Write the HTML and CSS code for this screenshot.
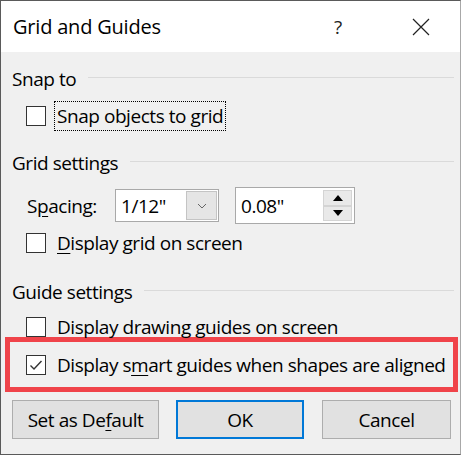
FILE: index.html
```html
<!DOCTYPE html>
<html lang="en">
<head>
    <meta charset="UTF-8">
    <title>Grid and Guides</title>
    <link rel="stylesheet" href="styles.css">
</head>
<body>
    <div class="dialog">
        <div class="titlebar">
            <span class="titlebar__title">Grid and Guides</span>
            <span class="titlebar__help">?</span>
            <span class="titlebar__close">
                <svg width="18" height="18" viewBox="0 0 18 18"><path d="M1 1 L17 17 M17 1 L1 17" stroke="#222" stroke-width="1.2" fill="none"/></svg>
            </span>
        </div>
        <div class="content">
            <div class="group">
                <span>Snap to</span>
                <div class="group__line"></div>
            </div>
            <div class="row row--snap">
                <span class="check"></span>
                <span class="label label--focus">Snap objects to <u>g</u>rid</span>
            </div>

            <div class="group group--grid">
                <span>Grid settings</span>
                <div class="group__line"></div>
            </div>
            <div class="row row--spacing">
                <span class="spacing-label">S<u>p</u>acing:</span>
                <div class="combo">
                    <span class="combo__value">1/12"</span>
                    <span class="combo__button">
                        <svg width="10" height="6" viewBox="0 0 10 6"><path d="M1 1 L5 5 L9 1" stroke="#666" stroke-width="1" fill="none"/></svg>
                    </span>
                </div>
                <div class="spin">
                    <span class="spin__value">0.08"</span>
                    <span class="spin__buttons">
                        <span class="spin__btn"><svg width="10" height="6" viewBox="0 0 10 6"><path d="M0 6 L5 0 L10 6 Z" fill="#000"/></svg></span>
                        <span class="spin__btn"><svg width="10" height="6" viewBox="0 0 10 6"><path d="M0 0 L5 6 L10 0 Z" fill="#000"/></svg></span>
                    </span>
                </div>
            </div>
            <div class="row row--display-grid">
                <span class="check"></span>
                <span class="label"><u>D</u>isplay grid on screen</span>
            </div>

            <div class="group group--guide">
                <span>Guide settings</span>
                <div class="group__line"></div>
            </div>
            <div class="row row--drawing">
                <span class="check"></span>
                <span class="label">Display drawing guides on screen</span>
            </div>
            <div class="highlight">
                <span class="check check--on">
                    <svg width="18" height="18" viewBox="0 0 18 18"><path d="M3.5 9.5 L7 13 L14.5 5" stroke="#333" stroke-width="1.4" fill="none"/></svg>
                </span>
                <span class="label">Display s<u>m</u>art guides when shapes are aligned</span>
            </div>

            <div class="buttons">
                <button class="btn btn--default">Set as De<u>f</u>ault</button>
                <button class="btn btn--ok">OK</button>
                <button class="btn btn--cancel">Cancel</button>
            </div>
        </div>
    </div>
</body>
</html>
```

FILE: styles.css
```css
* {
    margin: 0;
    padding: 0;
    box-sizing: border-box;
}

body {
    background-color: #fff;
    font-family: "Open Sans", "Noto Sans", sans-serif;
    color: #000;
}

.dialog {
    width: 461px;
    height: 455px;
    border: 1px solid #5a5a5a;
    border-right-color: #a8a8a8;
    background-color: #f0f0f0;
    display: flex;
    flex-direction: column;
}

.titlebar {
    height: 51px;
    background-color: #fff;
    display: flex;
    align-items: center;
    padding-left: 12px;
    flex-shrink: 0;
}

.titlebar__title {
    font-size: 20px;
    flex: 1;
    letter-spacing: -0.2px;
}

.titlebar__help {
    font-size: 19px;
    width: 78px;
    color: #222;
}

.titlebar__close {
    width: 48px;
    display: flex;
    align-items: center;
}

.content {
    padding: 14px 0 0 4px;
    font-size: 19px;
    letter-spacing: -0.45px;
}

u {
    text-underline-offset: 3px;
}

.group {
    height: 26px;
    display: flex;
    align-items: center;
    padding-left: 7px;
    padding-right: 6px;
}

.group__line {
    flex: 1;
    height: 1px;
    background-color: #dadada;
    margin-left: 12px;
    margin-top: -3px;
}

.group--grid {
    margin-top: 19px;
}

.group--guide {
    margin-top: 21px;
}

.row {
    display: flex;
    align-items: center;
    padding-left: 21px;
}

.row--snap {
    margin-top: 9px;
    height: 30px;
}

.row--spacing {
    margin-top: 11px;
    height: 37px;
    padding-left: 22px;
}

.row--display-grid {
    margin-top: 4px;
    height: 30px;
}

.row--drawing {
    margin-top: 12px;
    height: 20px;
}

.check {
    width: 20px;
    height: 20px;
    border: 1px solid #333;
    background-color: #fff;
    flex-shrink: 0;
    display: flex;
    align-items: center;
    justify-content: center;
}

.label {
    margin-left: 11px;
    white-space: nowrap;
}

.label--focus {
    outline: 1px dotted #000;
    outline-offset: 0;
    padding: 1px 2px;
    margin-left: 9px;
}

.spacing-label {
    width: 88px;
}

.combo {
    width: 104px;
    height: 33px;
    border: 1px solid #a9a9a9;
    background-color: #fff;
    display: flex;
    align-items: center;
    padding: 1px;
}

.combo__value {
    flex: 1;
    padding-left: 4px;
}

.combo__button {
    width: 31px;
    height: 29px;
    background-color: #e5e5e5;
    border: 1px solid #c4c4c4;
    display: flex;
    align-items: center;
    justify-content: center;
}

.spin {
    width: 120px;
    height: 37px;
    margin-left: 16px;
    border: 1px solid #a9a9a9;
    background-color: #fff;
    display: flex;
    align-items: center;
    padding: 2px;
}

.spin__value {
    flex: 1;
    padding-left: 3px;
}

.spin__buttons {
    width: 29px;
    height: 31px;
    display: flex;
    flex-direction: column;
}

.spin__btn {
    flex: 1;
    background-color: #e9e9e9;
    border: 1px solid #d4d4d4;
    display: flex;
    align-items: center;
    justify-content: center;
}

.highlight {
    width: 453px;
    height: 55px;
    border: 5px solid #f0444a;
    margin-left: 0;
    display: flex;
    align-items: center;
    padding-left: 16px;
}

.buttons {
    display: flex;
    margin-top: 8px;
    padding-left: 7px;
}

.btn {
    height: 39px;
    font-family: inherit;
    font-size: 19px;
    letter-spacing: -0.45px;
    background-color: #e1e1e1;
    border: 1px solid #adadad;
    color: #000;
}

.btn--default {
    width: 147px;
}

.btn--ok {
    width: 128px;
    margin-left: 17px;
    border: 2px solid #0078d7;
}

.btn--cancel {
    width: 129px;
    margin-left: 18px;
}
```
